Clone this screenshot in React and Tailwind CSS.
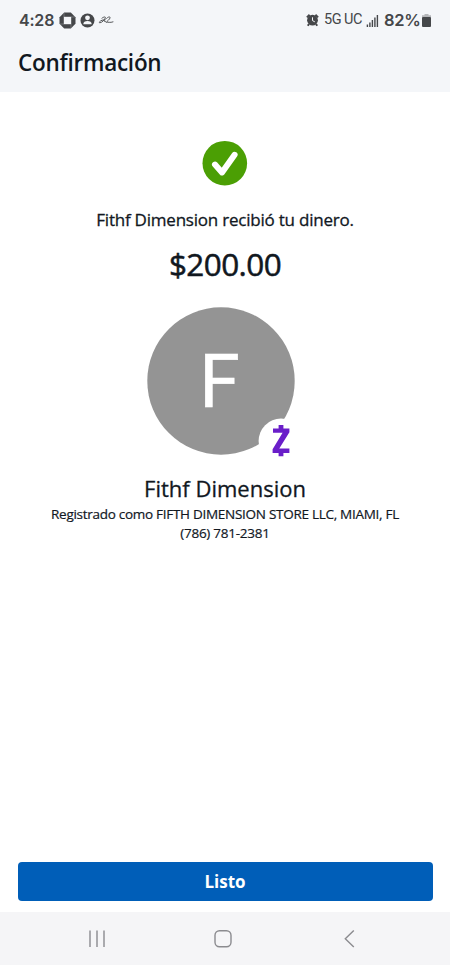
function StatusBar() {
  return (
    <div className="flex h-10 items-center justify-between pr-[19px] pl-[19px] text-[#45474a]">
      <div className="flex items-center">
        <span className="w-[36px] font-[Inter,sans-serif] text-[16px] leading-6 font-semibold tracking-[-0.2px]">4:28</span>
        <svg className="ml-1 h-[17px] w-[17px]" viewBox="0 0 17 17">
          <path d="M5.2 .5H11.8L16.5 5.2V11.8L11.8 16.5H5.2L.5 11.8V5.2Z" fill="currentColor" />
          <path d="M4.8 4.8H12.2V12.2H4.8Z" fill="#f4f6f9" />
          <path d="M5 1V5M16 5H12M12 16V12M1 12H5" stroke="#9b9da0" strokeWidth=".5" />
        </svg>
        <svg className="ml-1 h-[15px] w-[15px]" viewBox="0 0 15 15">
          <circle cx="7.5" cy="7.5" r="7" fill="currentColor" />
          <circle cx="7.5" cy="4.8" r="2.4" fill="#f4f6f9" />
          <path d="M3.3 11.3C3.3 9 5 8 7.5 8S11.7 9 11.7 11.3Z" fill="#f4f6f9" />
        </svg>
        <svg className="ml-[3px] h-[12px] w-[16px]" viewBox="0 0 16 12" fill="none" stroke="currentColor" strokeWidth=".9" strokeLinecap="round" strokeLinejoin="round">
          <path d="M3.8 4.3C5 3 7.6 2.4 7.4 3.6C7 5.8 3.6 8.8 1.8 8.8C.2 8.6 2.4 6.2 5.8 5.8" />
          <path d="M7.2 5.2C5.8 7.2 6.3 8.2 7.6 7.4" />
          <path d="M8.6 4.4C9.8 2.8 12.3 2.3 12.1 3.8C11.8 5.4 9 7.2 8.2 8.4C10 7.8 12 9 15 7.9" />
        </svg>
      </div>
      <div className="flex items-center">
        <svg className="h-[14px] w-[13px]" viewBox="0 0 13 14">
          <circle cx="6.5" cy="7.2" r="5.4" fill="currentColor" />
          <path d="M.9 4.4L3.6 1.8M12.1 4.4L9.4 1.8M3 11L1.8 12.8M10 11L11.2 12.8" stroke="currentColor" strokeWidth="2" />
          <path d="M6.5 4.3V7.6L8.8 8.8" stroke="#f4f6f9" fill="none" />
        </svg>
        <span className="ml-[5px] w-[38px] font-[Roboto,sans-serif] text-[14.5px] leading-6 tracking-[-0.5px] whitespace-nowrap">5G UC</span>
        <svg className="ml-1 h-[13px] w-[13px]" viewBox="0 0 13 13">
          <path d="M1.4 10.5V13M3.9 8.5V13M6.4 6V13M8.9 3.5V13M11.4 1V13" stroke="currentColor" strokeWidth="1.4" />
        </svg>
        <span className="ml-[5px] w-[38px] font-[Inter,sans-serif] text-[16.5px] leading-6 font-semibold tracking-[-0.3px]">82%</span>
        <svg className="h-[13px] w-[9px]" viewBox="0 0 9 13">
          <path d="M2.5 0H6.5V1.2H9V3.5H0V1.2H2.5Z" fill="#b5b7ba" />
          <rect y="3" width="9" height="10" rx="1" fill="currentColor" />
        </svg>
      </div>
    </div>
  );
}

function Avatar() {
  return (
    <svg className="mt-[20px] ml-[146px] h-[152px] w-[158px]" viewBox="146 305 158 152">
      <circle cx="221" cy="381" r="73.7" fill="#949494" />
      <text x="199.3" y="407.2" fill="#fff" stroke="#fff" strokeWidth=".6" fontSize="74.5" fontFamily="Roboto, sans-serif" textLength="40.6" lengthAdjust="spacingAndGlyphs">F</text>
      <circle cx="281" cy="441" r="22.4" fill="#fff" />
      <path d="M278.6 425H283.4V428.5H289.4V432.2L279.3 448.6H289.4V453H283.4V456.2H278.6V453H272.6V449.2L282.6 432.8H273V428.5H278.6Z" fill="#6a1ec9" />
    </svg>
  );
}

export default function App() {
  return (
    <div className="flex h-[965px] w-[450px] flex-col overflow-hidden bg-white font-['Open_Sans',sans-serif] text-[#11181f]">
      <header className="h-[92px] shrink-0 bg-[#f4f6f9]">
        <StatusBar />
        <h1 className="pt-[7px] pl-[18px] text-[22.5px] leading-8 font-semibold tracking-[-0.25px]">Confirmación</h1>
      </header>
      <main className="flex-1 pt-[48px] text-center">
        <svg className="mx-auto h-[46px] w-[46px]" viewBox="202 140 46 46">
          <circle cx="224.8" cy="163.2" r="22.3" fill="#4b9f04" />
          <path d="M215 164.6L222 172.4L234.6 154.8" fill="none" stroke="#fff" strokeWidth="6" strokeLinecap="round" strokeLinejoin="round" />
        </svg>
        <p className="mt-[22px] text-[17px] leading-6 tracking-[-0.22px] [-webkit-text-stroke:0.3px]">Fithf Dimension recibió tu dinero.</p>
        <p className="mt-[12px] text-[31.5px] leading-10 tracking-[-0.6px] [-webkit-text-stroke:0.5px]">$200.00</p>
        <div className="pt-px">
          <Avatar />
        </div>
        <h2 className="mt-[15px] text-[22px] leading-8 [-webkit-text-stroke:0.3px]">Fithf Dimension</h2>
        <p className="mt-px text-[13.5px] leading-[19px] tracking-[-0.28px] whitespace-nowrap [-webkit-text-stroke:0.2px]">Registrado como FIFTH DIMENSION STORE LLC, MIAMI, FL</p>
        <p className="text-[13.5px] leading-[19px] tracking-[-0.25px] [-webkit-text-stroke:0.2px]">(786) 781-2381</p>
      </main>
      <div className="px-[17.5px] pb-[11.5px]">
        <button className="block h-[39px] w-full rounded bg-[#005eb8] text-[17px] leading-[39px] font-bold text-white">Listo</button>
      </div>
      <nav className="h-[53px] shrink-0 bg-[#f5f5f7]">
        <svg className="h-[53px] w-[450px]" viewBox="0 912 450 53" fill="none" stroke="#8b8b8f" strokeWidth="1.4">
          <path d="M90 930.5V947M97 930.5V947M104 930.5V947" />
          <rect x="215" y="930.7" width="16" height="16" rx="4.5" />
          <path d="M353.8 930.5L345.3 938.7L353.8 947" />
        </svg>
      </nav>
    </div>
  );
}
